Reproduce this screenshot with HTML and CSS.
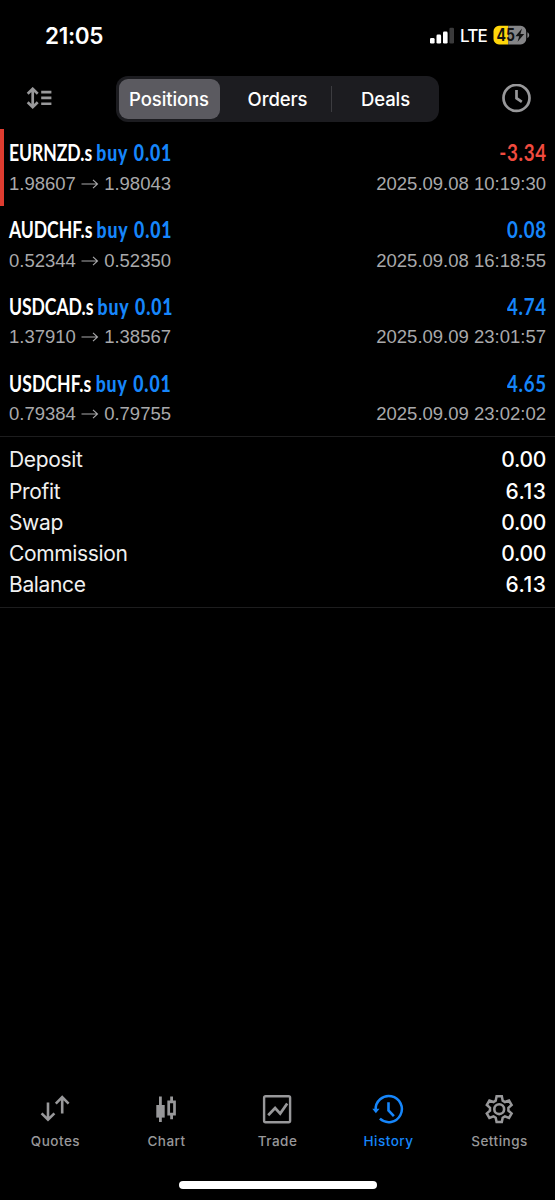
FILE: index.html
```html
<!DOCTYPE html>
<html lang="en">
<head>
<meta charset="utf-8">
<title>History</title>
<link rel="stylesheet" href="styles.css">
</head>
<body>
<div class="screen">
  <header class="status">
    <span class="clock">21:05</span>
    <div class="status-right">
      <svg class="signal" width="25" height="18" viewBox="0 0 25 18">
        <rect x="1" y="12" width="4.6" height="5.6" rx="1.3" fill="#fff"/>
        <rect x="7.5" y="8.6" width="4.6" height="9" rx="1.3" fill="#fff"/>
        <rect x="14" y="5.6" width="4.6" height="12" rx="1.3" fill="#fff"/>
        <rect x="20.4" y="1.8" width="4.6" height="15.8" rx="1.3" fill="#3a3a3b"/>
      </svg>
      <span class="lte">LTE</span>
      <svg class="battery" width="37" height="20" viewBox="0 0 37 20">
        <path d="M6 .8h9.3v18.6H6a5.5 5.5 0 0 1-5.5-5.5V6.3A5.5 5.5 0 0 1 6 .8z" fill="#ffd60a"/>
        <path d="M15.3 .8h12.4a5.5 5.5 0 0 1 5.5 5.5v7.6a5.5 5.5 0 0 1-5.5 5.5H15.3z" fill="#858587"/>
        <path d="M34.4 7.2c2.4 1 2.4 4.8 0 5.8z" fill="#858587"/>
        <text class="battery-text" x="3.6" y="16" textLength="18.4" lengthAdjust="spacingAndGlyphs">45</text>
        <path d="M29 3.6l-6.6 7.6h3.8l-1.6 5.6 6.6-7.9h-3.8z" fill="#111"/>
      </svg>
    </div>
  </header>

  <nav class="toolbar">
    <svg class="sort" width="26" height="24" viewBox="0 0 26 24" fill="none" stroke="#98989a">
      <path d="M6.7 2v18M1.7 6.7l5-4.9 5 4.9M1.7 15.3l5 4.9 5-4.9" stroke-width="2.7"/>
      <path d="M15.2 5.1h10.2M15.2 10.9h10.2M15.2 16.7h10.2" stroke-width="2.6"/>
    </svg>
    <div class="segments">
      <span class="segment segment-on">Positions</span>
      <span class="segment">Orders</span>
      <span class="segment segment-last">Deals</span>
    </div>
    <svg class="period" width="30" height="30" viewBox="0 0 30 30" fill="none" stroke="#98989a" stroke-width="2.7">
      <circle cx="15.5" cy="13.9" r="13"/>
      <path d="M15.5 6.1v8.1l5.3 3.6"/>
    </svg>
  </nav>

  <main>
    <section class="deals">
      <article class="deal deal-loss">
        <div class="line"><span class="name">EURNZD.s <b>buy 0.01</b></span><span class="result loss">-3.34</span></div>
        <div class="line detail"><span class="prices">1.98607 <svg class="arrow" viewBox="0 0 18 12"><path d="M.5 6h16M12 1.8L16.5 6 12 10.2"/></svg> 1.98043</span><time>2025.09.08 10:19:30</time></div>
      </article>
      <article class="deal">
        <div class="line"><span class="name">AUDCHF.s <b>buy 0.01</b></span><span class="result">0.08</span></div>
        <div class="line detail"><span class="prices">0.52344 <svg class="arrow" viewBox="0 0 18 12"><path d="M.5 6h16M12 1.8L16.5 6 12 10.2"/></svg> 0.52350</span><time>2025.09.08 16:18:55</time></div>
      </article>
      <article class="deal">
        <div class="line"><span class="name">USDCAD.s <b>buy 0.01</b></span><span class="result">4.74</span></div>
        <div class="line detail"><span class="prices">1.37910 <svg class="arrow" viewBox="0 0 18 12"><path d="M.5 6h16M12 1.8L16.5 6 12 10.2"/></svg> 1.38567</span><time>2025.09.09 23:01:57</time></div>
      </article>
      <article class="deal">
        <div class="line"><span class="name name-loose">USDCHF.s <b>buy 0.01</b></span><span class="result">4.65</span></div>
        <div class="line detail"><span class="prices">0.79384 <svg class="arrow" viewBox="0 0 18 12"><path d="M.5 6h16M12 1.8L16.5 6 12 10.2"/></svg> 0.79755</span><time>2025.09.09 23:02:02</time></div>
      </article>
    </section>
    <dl class="summary">
      <div class="sum"><dt>Deposit</dt><dd>0.00</dd></div>
      <div class="sum"><dt>Profit</dt><dd class="wide">6.13</dd></div>
      <div class="sum"><dt>Swap</dt><dd>0.00</dd></div>
      <div class="sum"><dt>Commission</dt><dd>0.00</dd></div>
      <div class="sum"><dt>Balance</dt><dd class="wide">6.13</dd></div>
    </dl>
  </main>

  <footer>
    <nav class="tabs">
      <a class="tab">
        <svg width="32" height="32" viewBox="0 0 32 32"><path d="M9 6.5v17M2.6 17.3L9 23.7l6.4-6.4M23.2 17.5V1.5M16.8 7.6l6.4-6.4 6.4 6.4"/></svg>
        <span>Quotes</span>
      </a>
      <a class="tab">
        <svg width="32" height="32" viewBox="0 0 32 32"><path d="M10.4 .5v25.5M21.6 .5v5M21.6 19v4.3" stroke-width="2.8"/><path d="M6.3 9h8.4v12.6H6.3z" fill="currentColor" stroke="none"/><path d="M18.7 5.8h5.8v12.4h-5.8z" stroke-width="2.7"/></svg>
        <span>Chart</span>
      </a>
      <a class="tab">
        <svg width="32" height="32" viewBox="0 0 32 32"><rect x="3.1" y="0.2" width="26" height="26" rx="1.5" stroke-width="2.4"/><path d="M7.2 19.3l6.9-7.3 5.1 5.6 7-10.2" stroke-width="2.7"/></svg>
        <span>Trade</span>
      </a>
      <a class="tab tab-on">
        <svg width="32" height="32" viewBox="0 0 32 32"><path d="M3.7 14A13.1 13.1 0 1 1 7.9 22.7" stroke-width="2.5"/><path d="M16.5 6.2v8.3l5.4 5.6" stroke-width="2.6"/><path d="M.3 12.8h7.2l-3.6 4.5z" fill="currentColor" stroke="none"/></svg>
        <span>History</span>
      </a>
      <a class="tab">
        <svg width="32" height="32" viewBox="0 0 32 32"><circle cx="16.2" cy="13.2" r="4.9" stroke-width="2.6"/><path d="M13.6 .3h5.2l.9 4.4 2.2 1.3 4.1-1.5 2.6 4.5-3.2 2.8v2.8l3.2 2.8-2.6 4.5-4.1-1.5-2.2 1.3-.9 4.4h-5.2l-.9-4.4-2.2-1.3-4.1 1.5-2.6-4.5 3.2-2.8v-2.8L3.8 9l2.6-4.5L10.5 6l2.2-1.3z" stroke-width="2.5"/></svg>
        <span>Settings</span>
      </a>
    </nav>
    <div class="home"></div>
  </footer>
</div>
</body>
</html>
```

FILE: styles.css
```css
* { box-sizing: border-box; }
body {
  margin: 0;
  background: #000;
  color: #fff;
  font-family: Inter, "Liberation Sans", sans-serif;
}
.screen {
  width: 555px;
  height: 1200px;
  display: flex;
  flex-direction: column;
  overflow: hidden;
}
.status {
  height: 72px;
  display: flex;
  justify-content: space-between;
  padding: 0 25px 2px 45px;
  align-items: center;
}
.clock { font-size: 22.5px; font-weight: 600; letter-spacing: -0.3px; }
.status-right { display: flex; align-items: center; }
.lte { font-size: 17px; font-weight: 500; margin: 0 6px 0 6px; padding-top: 2px; letter-spacing: -0.8px; }
.battery-text { font: 700 17px Inter, sans-serif; fill: #111; }
.toolbar {
  height: 57px;
  padding: 4px 24px 7px 26px;
  display: flex;
  align-items: center;
  justify-content: space-between;
}
.segments {
  display: flex;
  width: 323px;
  height: 46px;
  padding: 3px;
  border-radius: 12px;
  background: #1c1c20;
  margin-right: -1px;
}
.segment {
  position: relative;
  flex: 0 0 108px;
  display: flex;
  align-items: center;
  justify-content: center;
  font-size: 18.5px;
  font-weight: 500;
  letter-spacing: -0.1px;
}
.segment-on { flex-basis: 101px; margin-right: 4px; border-radius: 9px; background: #5b5a60; }
.segment-last { flex-basis: 108px; }
.segment-last::before {
  content: "";
  position: absolute;
  left: -1px;
  top: 7px;
  width: 1px;
  height: 26px;
  background: #3c3c40;
}
.deals { border-bottom: 1px solid #1d1d1e; height: 308px; }
.deal { height: 76.8px; padding: 9.3px 9px 0; }
.deal-loss { border-left: 4px solid #de3c30; padding-left: 5px; }
.line { display: flex; justify-content: space-between; height: 29px; align-items: center; white-space: nowrap; }
.name {
  font: 700 22px Lato, sans-serif;
  letter-spacing: -0.1px;
  transform: scaleX(0.8);
  transform-origin: left center;
}
.name-loose { letter-spacing: 0.1px; }
.name b, .result { color: #1686fb; }
.name b { letter-spacing: 1.1px; word-spacing: 1.2px; }
.result {
  font: 700 22px Lato, sans-serif;
  letter-spacing: 0.8px;
  margin-right: -0.8px;
  transform: scaleX(0.85);
  transform-origin: right center;
}
.loss { color: #f14b3f; }
.detail {
  height: 33px;
  font: 18.5px "Liberation Sans", Arial, sans-serif;
  color: #a9a9ab;
}
.arrow { width: 18px; height: 12px; fill: none; stroke: #a9a9ab; stroke-width: 1.1; }
.summary { margin: 0; padding: 7.4px 9px 6px; height: 171px; border-bottom: 1px solid #1d1d1e; }
.sum { display: flex; justify-content: space-between; align-items: center; height: 31.2px; font-size: 21px; }
.sum dt { color: #f0f0f0; letter-spacing: -0.35px; }
.sum dd { margin: 0; font-weight: 500; letter-spacing: -0.3px; }
.sum .wide { letter-spacing: 0.5px; margin-right: -0.5px; }
footer { margin-top: auto; height: 106px; }
.tabs { display: flex; height: 76px; }
.tab { flex: 1; display: flex; flex-direction: column; align-items: center; color: #98989a; font-size: 13.5px; font-weight: 500; letter-spacing: 0.5px; }
.tab svg { fill: none; stroke: currentColor; stroke-width: 2.6; overflow: visible; margin: 2px 1px 0 0; }
.tab span { line-height: 18px; margin-top: 4px; }
.tab-on { color: #1686fb; }
.home { width: 198px; height: 8px; margin: 11px auto 0; border-radius: 4px; background: #fff; }
```
